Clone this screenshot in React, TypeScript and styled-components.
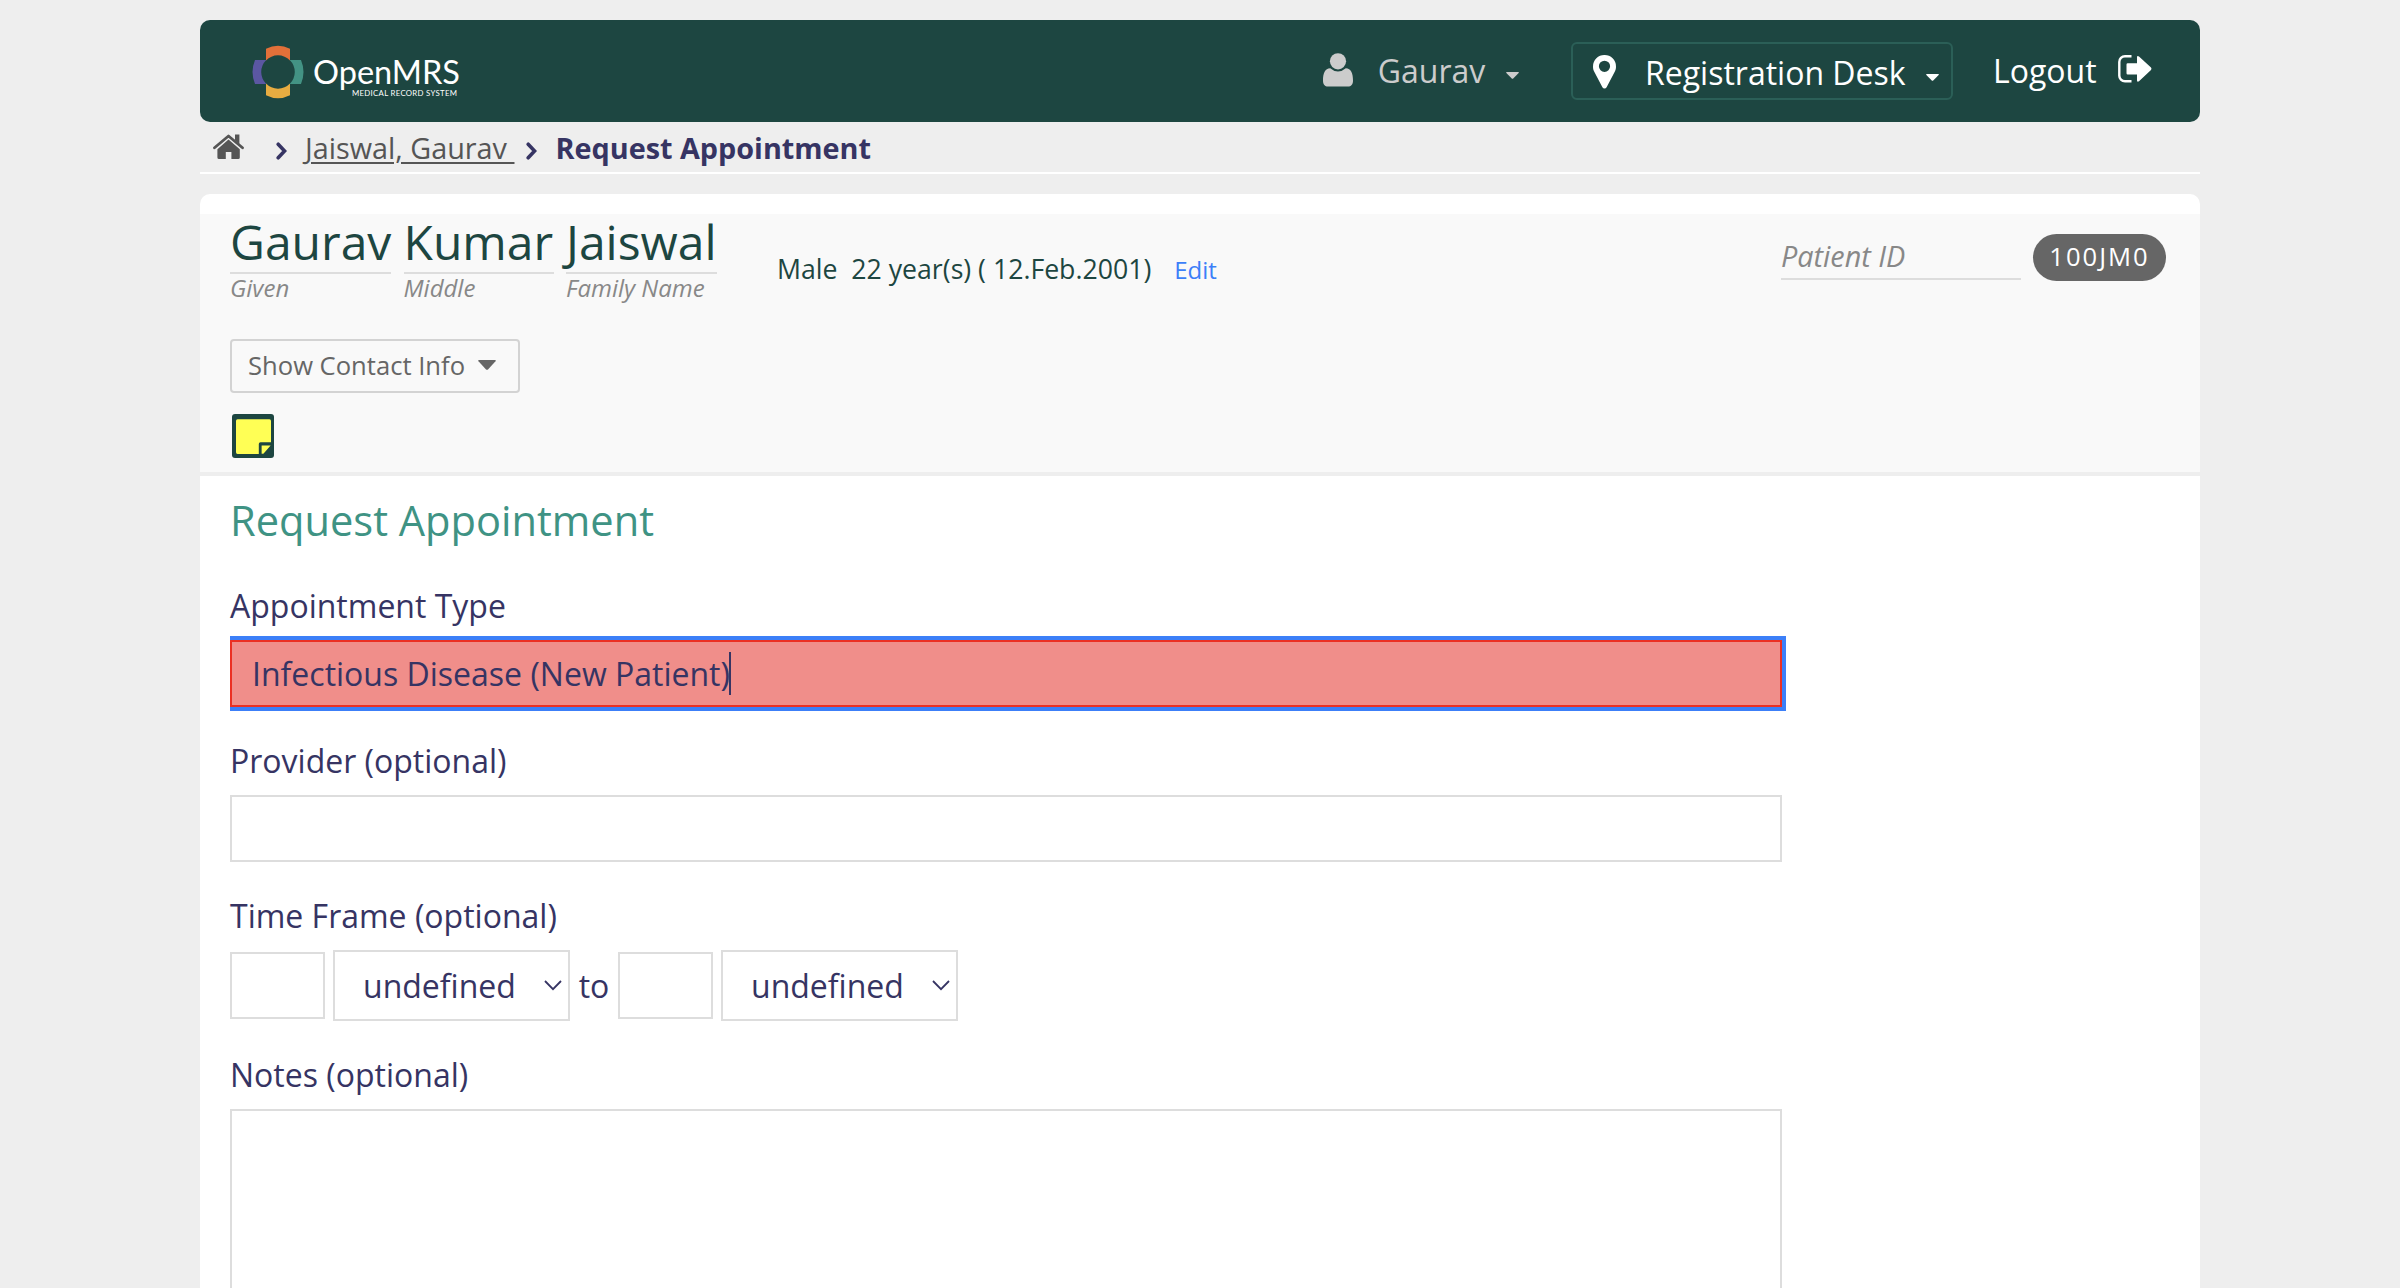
import React from "react";
import styled, { createGlobalStyle } from "styled-components";

const GlobalStyle = createGlobalStyle`
  *, *::before, *::after { box-sizing: border-box; }
  html, body { margin: 0; padding: 0; background: #eeeeee; }
  body {
    font-family: "Open Sans", "Noto Sans", sans-serif;
    font-size: 32px;
    color: #363463;
    font-variant-ligatures: none;
    overflow: hidden;
  }
  svg { display: block; flex: none; }
`;

const Page = styled.div`
  width: 2400px;
  height: 1288px;
  padding: 20px 200px 0;
  overflow: hidden;
  display: flex;
  flex-direction: column;
`;

const Header = styled.header`
  flex: none;
  height: 102px;
  padding: 0 48px 0 52px;
  display: flex;
  align-items: center;
  background: #1d4641;
  border-radius: 10px;
  color: #ffffff;
`;

const LogoLink = styled.a`
  padding-top: 2px;
`;

const Nav = styled.nav`
  margin-left: auto;
  display: flex;
  align-items: center;
  white-space: nowrap;
  line-height: 44px;
`;

const UserMenu = styled.div`
  width: 196px;
  margin-right: 52px;
  display: flex;
  align-items: center;
  justify-content: space-between;
  color: #cccccc;
`;

const UserName = styled.span`
  margin-left: 4px;
`;

const IconLift = styled.span<{ $by: number }>`
  display: block;
  padding-bottom: ${(p) => p.$by}px;
`;

const LocationMenu = styled.div`
  width: 382px;
  height: 58px;
  margin-right: 40px;
  padding: 0 12px 0 20px;
  display: flex;
  align-items: center;
  border: 2px solid #2b5f57;
  border-radius: 6px;
`;

const LocationName = styled.span`
  padding-top: 4px;
  margin: 0 auto 0 29px;
`;

const LogoutLink = styled.div`
  width: 159px;
  display: flex;
  align-items: center;
  justify-content: space-between;
`;

const CaretBox = styled.span<{ $drop?: number }>`
  display: block;
  padding-top: ${(p) => p.$drop ?? 0}px;
`;

const Breadcrumbs = styled.div`
  flex: none;
  height: 52px;
  padding-left: 13px;
  display: flex;
  align-items: center;
  border-bottom: 2px solid #ffffff;
  font-size: 28.8px;
  line-height: 38px;
  white-space: pre;
`;

const CrumbLink = styled.a`
  margin: 1px 12px 0 18px;
  color: #555555;
  text-decoration: underline;
  text-decoration-thickness: 2px;
  text-underline-offset: 3px;
`;

const CrumbCurrent = styled.span`
  margin: 1px 0 0 18px;
  font-weight: 700;
`;

const CrumbArrow = styled.span<{ $gap?: number }>`
  margin: 7px 0 0 ${(p) => p.$gap ?? 0}px;
`;

const Card = styled.main`
  margin-top: 20px;
  flex: 1;
  min-height: 0;
  padding-top: 20px;
  background: #ffffff;
  border-radius: 10px 10px 0 0;
  display: flex;
  flex-direction: column;
`;

const PatientHeader = styled.section`
  flex: none;
  height: 262px;
  padding: 0 34px 0 30px;
  background: #f9f9f9;
  border-bottom: 4px solid #eeeeee;
  color: #1d4641;
`;

const PatientTop = styled.div`
  height: 125px;
  display: flex;
  align-items: flex-start;
  white-space: pre;
`;

const Names = styled.div`
  display: flex;
  gap: 12.5px;
`;

const NamePart = styled.div<{ $width: number }>`
  width: ${(p) => p.$width}px;
`;

const NameValue = styled.div`
  height: 60px;
  font-size: 48px;
  line-height: 56px;
  border-bottom: 2px solid #dddddd;
`;

const NameCaption = styled.div`
  font-size: 24px;
  line-height: 28px;
  font-style: italic;
  color: #888888;
`;

const Demographics = styled.div`
  margin: 36px 0 0 60px;
  display: flex;
  align-items: baseline;
  font-size: 26.67px;
  line-height: 38px;
`;

const EditLink = styled.a`
  margin-left: 23px;
  font-size: 24px;
  color: #3c7ff8;
`;

const Identifiers = styled.div`
  margin: 20px 0 0 auto;
  display: flex;
  gap: 12px;
`;

const IdLabel = styled.div`
  width: 240px;
  height: 46px;
  border-bottom: 2px solid #dddddd;
  font-size: 28.8px;
  line-height: 44px;
  font-style: italic;
  color: #888888;
`;

const IdPill = styled.div`
  width: 133px;
  height: 47px;
  border-radius: 24px;
  background: #666666;
  color: #ffffff;
  font-size: 25.6px;
  line-height: 46px;
  letter-spacing: 2px;
  text-align: center;
`;

const ContactButton = styled.button`
  width: 290px;
  height: 54px;
  margin: 0;
  padding: 0 22px 0 16px;
  display: flex;
  align-items: center;
  justify-content: space-between;
  background: transparent;
  border: 2px solid #d3d3d3;
  border-radius: 4px;
  font: inherit;
  font-size: 25.6px;
  line-height: 38px;
  white-space: nowrap;
  color: #666666;
`;

const NoteSlot = styled.div`
  margin: 21px 0 0 2px;
`;

const Form = styled.form`
  padding: 14px 30px 0;
`;

const Title = styled.h2`
  margin: 0 0 34px;
  font-size: 41.6px;
  line-height: 60px;
  font-weight: 400;
  color: #3f9384;
`;

const Field = styled.div`
  margin-bottom: 32px;
`;

const Label = styled.label`
  display: block;
  margin-bottom: 12px;
  line-height: 44px;
`;

const Input = styled.input<{ $width?: number }>`
  display: block;
  width: ${(p) => p.$width ?? 1552}px;
  height: 67px;
  margin: 0;
  padding: 0 20px;
  border: 2px solid #dddddd;
  border-radius: 0;
  background: #ffffff;
  font: inherit;
  color: inherit;
`;

const FocusedInput = styled.div`
  width: 1552px;
  height: 67px;
  padding: 0 20px;
  display: flex;
  align-items: center;
  border: 2px solid #eb3023;
  background: #f08e8a;
  box-shadow: 0 4px 0 #3c7ff8, 0 -4px 0 #3c7ff8, 4px 4px 0 #3c7ff8, 4px -4px 0 #3c7ff8;
  line-height: 44px;
`;

const TextCursor = styled.span`
  width: 2px;
  height: 43px;
  margin-left: -1px;
  background: #363463;
`;

const TimeRow = styled.div`
  display: flex;
  align-items: center;
  gap: 8px;
`;

const To = styled.span`
  width: 32px;
  text-align: center;
  line-height: 44px;
`;

const Select = styled.div`
  width: 237px;
  height: 71px;
  padding: 0 6px 0 28px;
  display: flex;
  align-items: center;
  justify-content: space-between;
  border: 2px solid #dddddd;
  background: #ffffff;
  line-height: 44px;
`;

const NotesArea = styled.textarea`
  display: block;
  width: 1552px;
  height: 240px;
  margin: 0;
  padding: 12px 20px;
  border: 2px solid #dddddd;
  background: #ffffff;
  resize: none;
  font: inherit;
`;

const Logo = () => (
  <svg width="210" height="60" viewBox="0 0 210 60">
    <path d="M14 6.700Q26 .7 38 6.700V18.400A16.700 16.700 0 0 0 14 18.400Z" fill="#e27039" />
    <path d="M14 53.300Q26 59.300 38 53.300V41.600A16.700 16.700 0 0 1 14 41.600Z" fill="#e7ac41" />
    <path d="M3 18H14.300A16.700 16.700 0 0 0 14.300 42H3Q-2 30 3 18Z" fill="#5b57a2" />
    <path d="M49 18H37.700A16.700 16.700 0 0 1 37.700 42H49Q54 30 49 18Z" fill="#439384" />
    <text x="61" y="41.700" fontFamily="Lato, sans-serif" fontSize="33" fill="#ffffff" textLength="147" lengthAdjust="spacingAndGlyphs">OpenMRS</text>
    <text x="100" y="54" fontFamily="Lato, sans-serif" fontSize="7.800" fill="#ffffff" textLength="105" lengthAdjust="spacing">MEDICAL RECORD SYSTEM</text>
  </svg>
);

const Caret = ({ w, h }: { w: number; h: number }) => (
  <svg width={w} height={h} viewBox="0 0 18 10" preserveAspectRatio="none">
    <path d="M1 0H17Q18.400 .3 17.500 1.300L10 9.400Q9 10.200 8 9.400L.5 1.300Q-.4 .3 1 0Z" fill="currentColor" />
  </svg>
);

const UserIcon = () => (
  <svg width="30" height="34" viewBox="0 0 30 34" fill="currentColor">
    <circle cx="15" cy="8.300" r="8.100" />
    <path d="M7.200 15.300Q10.800 18.500 15 18.500T22.800 15.300C28 15.300 30 20.500 30 27.500C30 31.500 28 33.500 25 33.500H5C2 33.500 0 31.500 0 27.500C0 20.500 2 15.300 7.200 15.300Z" />
  </svg>
);

const PinIcon = () => (
  <svg width="23" height="34" viewBox="0 0 23 34" fill="currentColor">
    <path fillRule="evenodd" d="M11.500 0A11.400 11.400 0 0 1 23 11.400C23 13.500 22.600 14.900 22 16.200L13.600 32.200Q12.900 33.500 11.500 33.500T9.400 32.200L1 16.200C.4 14.900 0 13.500 0 11.400A11.400 11.400 0 0 1 11.500 0ZM11.500 5.700A5.600 5.600 0 1 0 11.500 16.900A5.600 5.600 0 1 0 11.500 5.700Z" />
  </svg>
);

const LogoutIcon = () => (
  <svg width="34" height="28" viewBox="0 0 34 28">
    <path d="M13.500 1.200H7A5.700 5.700 0 0 0 1.300 7V20.500A5.700 5.700 0 0 0 7 26.300H13.500" fill="none" stroke="currentColor" strokeWidth="2.400" />
    <path d="M8.500 9.500Q8.500 8.300 9.700 8.300H19V2Q19.300 .3 21 1.500L33 12.600Q34 13.700 33 14.900L21 26.300Q19.300 27.500 19 25.500V19.400H9.700Q8.500 19.400 8.500 18.200Z" fill="currentColor" />
  </svg>
);

const HomeIcon = () => (
  <svg width="31" height="25" viewBox="0 0 31 25" fill="#555555">
    <path d="M1.500 13.800L15.500 2L29.500 13.800" fill="none" stroke="#555555" strokeWidth="2.800" strokeLinecap="round" strokeLinejoin="round" />
    <path d="M22 .6H26.400V10L22 6.300Z" />
    <path d="M15.500 5.600L26.800 15.200V23.400Q26.800 25 25.200 25H18.400V18H12.800V25H6Q4.400 25 4.400 23.400V15.200Z" />
  </svg>
);

const ArrowIcon = () => (
  <svg width="11" height="18" viewBox="0 0 11 18">
    <path d="M2.200 2.200L8.600 9L2.200 15.800" fill="none" stroke="#363463" strokeWidth="3.600" strokeLinecap="round" strokeLinejoin="miter" />
  </svg>
);

const NoteIcon = () => (
  <svg width="42" height="44" viewBox="0 0 42 44">
    <rect width="42" height="44" rx="3" fill="#1d4641" />
    <path d="M5.500 5.300H37.500Q39 5.300 39 7V28.300H28.500Q26.800 28.300 26.800 30V40H5.500Q4 40 4 38.300V7Q4 5.300 5.500 5.300Z" fill="#ffff55" />
    <path d="M29.600 31.500H38.600L31.400 39.700H29.600Z" fill="#ffff55" />
  </svg>
);

const ChevronDown = () => (
  <svg width="18" height="11" viewBox="0 0 18 11">
    <path d="M1 1L9 9.200L17 1" fill="none" stroke="#363463" strokeWidth="1.800" />
  </svg>
);

const names = [
  { value: "Gaurav", caption: "Given", width: 161 },
  { value: "Kumar", caption: "Middle", width: 150 },
  { value: "Jaiswal", caption: "Family Name", width: 151 },
];

const UnitSelect = () => (
  <Select>
    <span>undefined</span>
    <ChevronDown />
  </Select>
);

export default function App() {
  return (
    <>
      <GlobalStyle />
      <Page>
        <Header>
          <LogoLink>
            <Logo />
          </LogoLink>
          <Nav>
            <UserMenu>
              <IconLift $by={2}>
                <UserIcon />
              </IconLift>
              <UserName>Gaurav</UserName>
              <CaretBox $drop={8}>
                <Caret w={13} h={7} />
              </CaretBox>
            </UserMenu>
            <LocationMenu>
              <CaretBox $drop={1}>
                <PinIcon />
              </CaretBox>
              <LocationName>Registration Desk</LocationName>
              <CaretBox $drop={12}>
                <Caret w={13} h={7} />
              </CaretBox>
            </LocationMenu>
            <LogoutLink>
              <span>Logout</span>
              <IconLift $by={4}>
                <LogoutIcon />
              </IconLift>
            </LogoutLink>
          </Nav>
        </Header>
        <Breadcrumbs>
          <IconLift $by={1}>
            <HomeIcon />
          </IconLift>
          <CrumbArrow $gap={32}>
            <ArrowIcon />
          </CrumbArrow>
          <CrumbLink>{"Jaiswal, Gaurav "}</CrumbLink>
          <CrumbArrow>
            <ArrowIcon />
          </CrumbArrow>
          <CrumbCurrent>Request Appointment</CrumbCurrent>
        </Breadcrumbs>
        <Card>
          <PatientHeader>
            <PatientTop>
              <Names>
                {names.map((n) => (
                  <NamePart key={n.caption} $width={n.width}>
                    <NameValue>{n.value}</NameValue>
                    <NameCaption>{n.caption}</NameCaption>
                  </NamePart>
                ))}
              </Names>
              <Demographics>
                <span>{"Male  22 year(s) ( 12.Feb.2001)"}</span>
                <EditLink>Edit</EditLink>
              </Demographics>
              <Identifiers>
                <IdLabel>Patient ID</IdLabel>
                <IdPill>100JM0</IdPill>
              </Identifiers>
            </PatientTop>
            <ContactButton type="button">
              <span>Show Contact Info</span>
              <IconLift $by={2}>
                <Caret w={18} h={10} />
              </IconLift>
            </ContactButton>
            <NoteSlot>
              <NoteIcon />
            </NoteSlot>
          </PatientHeader>
          <Form>
            <Title>Request Appointment</Title>
            <Field>
              <Label>Appointment Type</Label>
              <FocusedInput>
                <span>Infectious Disease (New Patient)</span>
                <TextCursor />
              </FocusedInput>
            </Field>
            <Field>
              <Label>Provider (optional)</Label>
              <Input />
            </Field>
            <Field>
              <Label>Time Frame (optional)</Label>
              <TimeRow>
                <Input $width={95} />
                <UnitSelect />
                <To>to</To>
                <Input $width={95} />
                <UnitSelect />
              </TimeRow>
            </Field>
            <Field>
              <Label>Notes (optional)</Label>
              <NotesArea />
            </Field>
          </Form>
        </Card>
      </Page>
    </>
  );
}
